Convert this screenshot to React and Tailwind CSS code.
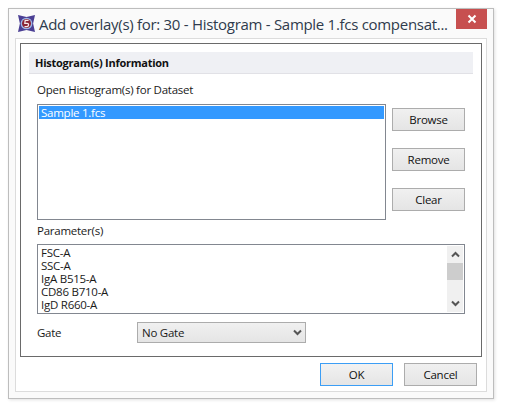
import React from 'react';

const DialogButton = ({ children, focused }) => (
  <button
    className={
      focused
        ? 'w-[73px] h-[23px] border border-[#3c9ef5] bg-gradient-to-b from-[#f2f2f2] to-[#e5e5e5] leading-none text-[#111]'
        : 'w-[73px] h-[23px] border border-[#acacac] bg-gradient-to-b from-[#f0f0f0] to-[#e5e5e5] leading-none text-[#111]'
    }
  >
    {children}
  </button>
);

const Chevron = ({ up }) => (
  <svg width="9" height="7" viewBox="0 0 9 7" className="block">
    <path
      d={up ? 'M1 5.5 L4.5 2 L8 5.5' : 'M1 1.5 L4.5 5 L8 1.5'}
      fill="none"
      stroke="#555"
      strokeWidth="2"
    />
  </svg>
);

const AppIcon = () => (
  <svg width="17" height="17" viewBox="0 0 18 18" className="block">
    <path d="M0 0 L9 2 L18 0 L16 9 L18 18 L9 16 L0 18 L2 9 Z" fill="#4b3f94" />
    <circle cx="9" cy="9" r="6.2" fill="#9db7e6" />
    <circle cx="9" cy="9" r="4.8" fill="#8c2436" />
    <path d="M11.2 5.8 H7.6 L7.2 8.8 H9.8 Q11.2 8.8 11.2 10.4 Q11.2 12.2 9.6 12.2 H6.9" fill="none" stroke="#f6eaec" strokeWidth="1.3" />
  </svg>
);

export default function App() {
  const params = ['FSC-A', 'SSC-A', 'IgA B515-A', 'CD86 B710-A', 'IgD R660-A'];

  return (
    <div className="w-[505px] h-[407px] bg-white pt-2 pl-2 font-['Open_Sans','Liberation_Sans',sans-serif] text-[11.5px] tracking-[-0.25px] text-[#1a1a1a]">
      <div className="w-[486px] h-[391px] border border-[#bdbdbd] bg-[#fafafa] px-[6px] shadow-[1px_1px_3px_rgba(0,0,0,0.12)] flex flex-col">
        {/* Title bar */}
        <div className="h-[29px] shrink-0 flex items-start">
          <div className="mt-[6px] ml-[3px] shrink-0">
            <AppIcon />
          </div>
          <div className="mt-[3px] ml-[4px] w-[412px] whitespace-nowrap text-[15px] tracking-[-0.29px] leading-[24px] text-[#2f3b4c]">
            Add overlay(s) for: 30 - Histogram - Sample 1.fcs compensat...
          </div>
          <div className="ml-auto w-[31px] h-[20px] bg-[#c75050] flex items-center justify-center">
            <svg width="10" height="10" viewBox="0 0 10 10" className="block">
              <path d="M1.5 1.5 L8.5 8.5 M8.5 1.5 L1.5 8.5" stroke="#fff" strokeWidth="2" />
            </svg>
          </div>
        </div>

        {/* Client area */}
        <div className="w-[472px] h-[354px] border border-[#dcdcdc] bg-white p-[4px] flex flex-col">
          <div className="w-[462px] h-[314px] border border-[#6a6a6a] px-[8px] pt-[8px] flex flex-col">
            <div className="h-[22px] shrink-0 bg-[#eff0f4] border-b border-[#e1e1e6] pl-[6px] pt-[1px] flex items-center font-bold text-[11px] tracking-[-0.25px] text-[#111]">
              Histogram(s) Information
            </div>

            <div className="ml-[8px] mt-[8px] leading-[16px]">Open Histogram(s) for Dataset</div>

            <div className="ml-[8px] mt-[6px] flex">
              <div className="w-[349px] h-[116px] border border-[#828790] p-[1px]">
                <div className="h-[13px] bg-[#3399ff] text-white pl-[2px] leading-[13px]">Sample 1.fcs</div>
              </div>
              <div className="ml-[6px] mt-[4px] flex flex-col gap-[17px]">
                <DialogButton>Browse</DialogButton>
                <DialogButton>Remove</DialogButton>
                <DialogButton>Clear</DialogButton>
              </div>
            </div>

            <div className="ml-[8px] mt-[2px] leading-[16px] h-[22px] pt-[1px]">Parameter(s)</div>

            <div className="ml-[8px] w-[428px] h-[70px] border border-[#828790] p-[1px] flex">
              <div className="flex-1 pl-[2px]">
                {params.map((p) => (
                  <div key={p} className="h-[13px] leading-[13px]">{p}</div>
                ))}
              </div>
              <div className="w-[16px] bg-[#f0f0f0] flex flex-col items-center">
                <div className="h-[17px] flex items-center justify-center"><Chevron up /></div>
                <div className="w-full h-[17px] bg-[#cdcdcd]" />
                <div className="mt-auto h-[17px] flex items-center justify-center"><Chevron /></div>
              </div>
            </div>

            <div className="ml-[8px] mt-[8px] flex items-center">
              <div className="w-[100px]">Gate</div>
              <div className="w-[169px] h-[21px] border border-[#acacac] bg-gradient-to-b from-[#f0f0f0] to-[#e5e5e5] pl-[4px] pr-[3px] flex items-center justify-between">
                <span>No Gate</span>
                <Chevron />
              </div>
            </div>
          </div>

          <div className="mt-[6px] flex justify-end gap-[11px] pr-[5px]">
            <DialogButton focused>OK</DialogButton>
            <DialogButton>Cancel</DialogButton>
          </div>
        </div>
      </div>
    </div>
  );
}
